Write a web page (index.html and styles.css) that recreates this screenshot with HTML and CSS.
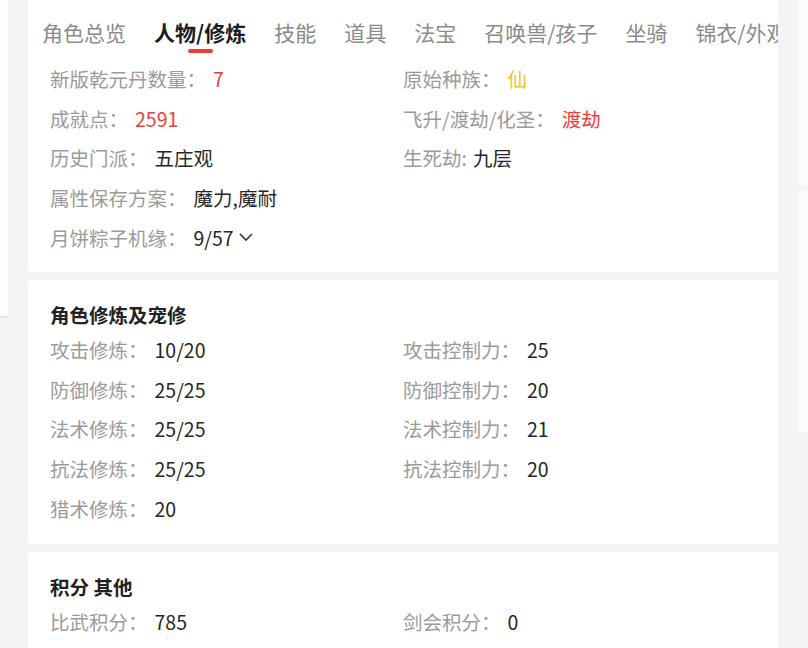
FILE: index.html
```html
<!DOCTYPE html>
<html lang="zh-CN">
<head>
<meta charset="utf-8">
<link rel="stylesheet" href="styles.css">
</head>
<body>
<div class="page">
  <div class="side-left"><div class="ghost-left"></div></div>
  <div class="main">
    <section class="card card-top">
      <nav class="tabs">
        <div class="tab"><span class="tab-text">角色总览</span><span class="bar"></span></div>
        <div class="tab active"><span class="tab-text">人物/修炼</span><span class="bar"></span></div>
        <div class="tab"><span class="tab-text">技能</span><span class="bar"></span></div>
        <div class="tab"><span class="tab-text">道具</span><span class="bar"></span></div>
        <div class="tab"><span class="tab-text">法宝</span><span class="bar"></span></div>
        <div class="tab"><span class="tab-text">召唤兽/孩子</span><span class="bar"></span></div>
        <div class="tab"><span class="tab-text">坐骑</span><span class="bar"></span></div>
        <div class="tab"><span class="tab-text">锦衣/外观</span><span class="bar"></span></div>
      </nav>
      <div class="grid">
        <div class="row"><span class="label">新版乾元丹数量：</span><span class="value red">7</span></div>
        <div class="row"><span class="label">原始种族：</span><span class="value gold">仙</span></div>
        <div class="row"><span class="label">成就点：</span><span class="value red">2591</span></div>
        <div class="row"><span class="label">飞升/渡劫/化圣：</span><span class="value red">渡劫</span></div>
        <div class="row"><span class="label">历史门派：</span><span class="value">五庄观</span></div>
        <div class="row"><span class="label">生死劫:</span><span class="value tight">九层</span></div>
        <div class="row"><span class="label">属性保存方案：</span><span class="value">魔力,魔耐</span></div>
        <div class="row"><span class="label"></span></div>
        <div class="row"><span class="label">月饼粽子机缘：</span><span class="value">9/57</span><svg class="chev" width="16" height="10" viewBox="0 0 16 10"><polyline points="2,2 8,8 14,2" fill="none" stroke="#333" stroke-width="1.6"/></svg></div>
      </div>
    </section>

    <section class="card">
      <h2 class="title">角色修炼及宠修</h2>
      <div class="grid">
        <div class="row"><span class="label">攻击修炼：</span><span class="value">10/20</span></div>
        <div class="row"><span class="label">攻击控制力：</span><span class="value">25</span></div>
        <div class="row"><span class="label">防御修炼：</span><span class="value">25/25</span></div>
        <div class="row"><span class="label">防御控制力：</span><span class="value">20</span></div>
        <div class="row"><span class="label">法术修炼：</span><span class="value">25/25</span></div>
        <div class="row"><span class="label">法术控制力：</span><span class="value">21</span></div>
        <div class="row"><span class="label">抗法修炼：</span><span class="value">25/25</span></div>
        <div class="row"><span class="label">抗法控制力：</span><span class="value">20</span></div>
        <div class="row"><span class="label">猎术修炼：</span><span class="value">20</span></div>
      </div>
    </section>

    <section class="card card-last">
      <h2 class="title">积分 其他</h2>
      <div class="grid">
        <div class="row"><span class="label">比武积分：</span><span class="value">785</span></div>
        <div class="row"><span class="label">剑会积分：</span><span class="value">0</span></div>
      </div>
    </section>
  </div>
  <div class="side-right">
    <div class="ghost-r1"></div>
    <div class="ghost-r2"></div>
  </div>
</div>
</body>
</html>
```

FILE: styles.css
```css
html, body {
  margin: 0;
  padding: 0;
  background: #f4f4f4;
  font-family: "Noto Sans CJK SC", "Noto Sans", sans-serif;
}
.page {
  display: flex;
  width: 808px;
  height: 648px;
  overflow: hidden;
}
.side-left {
  width: 8px;
  flex: none;
}
.ghost-left {
  height: 317px;
  background: #fdfdfd;
  box-shadow: inset 0 -97px 0 -96px #e6e6e6;
  border-bottom: 1px solid #e8e8e8;
}
.main {
  width: 750px;
  flex: none;
  margin-left: 20px;
  display: flex;
  flex-direction: column;
  gap: 8px;
}
.side-right {
  width: 10px;
  flex: none;
  margin-left: 20px;
  display: flex;
  flex-direction: column;
  gap: 5px;
}
.ghost-r1 { height: 185px; background: #fbfbfb; }
.ghost-r2 { height: 242px; background: #fbfbfb; }

.card {
  background: #fff;
  border-radius: 4px;
  padding: 20px 22px 16px;
}
.card-top {
  padding: 0 22px 15px;
  border-radius: 0 0 4px 4px;
}
.card-last {
  flex: 1;
}
.tabs {
  display: flex;
  gap: 28px;
  margin-left: -8px;
  height: 59px;
  white-space: nowrap;
  overflow: hidden;
  margin-right: -22px;
}
.tab {
  display: flex;
  flex-direction: column;
  align-items: center;
  padding-top: 15px;
  flex: none;
}
.tab-text {
  font-size: 21px;
  line-height: 34px;
  color: #8a8a8a;
}
.bar {
  width: 25px;
  height: 4px;
  border-radius: 2px;
  background: transparent;
}
.tab.active .tab-text {
  color: #1c1c1c;
  font-weight: 700;
}
.tab.active .bar {
  background: #ef3b3b;
}
.title {
  margin: 0;
  font-size: 19.5px;
  line-height: 30px;
  font-weight: 700;
  color: #222;
}
.grid {
  display: grid;
  grid-template-columns: 353px 353px;
}
.row {
  display: flex;
  align-items: center;
  height: 39.6px;
  font-size: 19.5px;
  white-space: nowrap;
}
.label {
  color: #9a9a9a;
}
.value {
  color: #262626;
  margin-left: 7px;
}
.value.tight {
  margin-left: 6px;
}
.red { color: #ec3e3e; }
.gold { color: #f6c324; }
.chev {
  margin-left: 4px;
  margin-top: -1px;
}
```
